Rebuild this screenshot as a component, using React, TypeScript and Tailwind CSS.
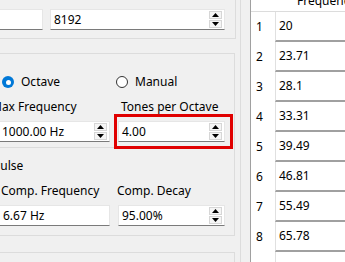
import React from "react";

const FONT = { fontFamily: '"Noto Sans", "Liberation Sans", sans-serif' };

function Arrows() {
  return (
    <div className="flex flex-col gap-[1px] w-[13px] mr-[2px]">
      <div className="h-[8px] bg-[#f5f5f5] border border-[#d6d6d6] flex items-center justify-center">
        <svg width="7" height="4" viewBox="0 0 7 4">
          <path d="M0 4 L3.5 0 L7 4 Z" fill="#000" />
        </svg>
      </div>
      <div className="h-[8px] bg-[#f5f5f5] border border-[#d6d6d6] flex items-center justify-center">
        <svg width="7" height="4" viewBox="0 0 7 4">
          <path d="M0 0 L3.5 4 L7 0 Z" fill="#000" />
        </svg>
      </div>
    </div>
  );
}

function SpinBox({
  value,
  width,
  arrows = true,
  className = "",
}: {
  value: string;
  width: string;
  arrows?: boolean;
  className?: string;
}) {
  return (
    <div
      className={`h-[21px] bg-white border border-[#e6e6e6] border-b-[#7a7a7a] flex items-center ${width} ${className}`}
    >
      <span className="flex-1 pl-[3px] text-[12px] leading-none text-black">{value}</span>
      {arrows && <Arrows />}
    </div>
  );
}

function Radio({ checked, label }: { checked: boolean; label: string }) {
  return (
    <div className="flex items-center gap-[7px]">
      {checked ? (
        <div className="w-[12px] h-[12px] rounded-full bg-[#0078d7] flex items-center justify-center">
          <div className="w-[5px] h-[5px] rounded-full bg-white" />
        </div>
      ) : (
        <div className="w-[12px] h-[12px] rounded-full border border-[#333] bg-white" />
      )}
      <span className="text-[12px] leading-none">{label}</span>
    </div>
  );
}

const ROWS = ["20", "23.71", "28.1", "33.31", "39.49", "46.81", "55.49", "65.78", ""];

export default function App() {
  return (
    <div
      className="w-[345px] h-[262px] overflow-hidden bg-[#f0f0f0] flex text-black"
      style={FONT}
    >
      {/* settings column */}
      <div className="w-[241px] h-full border-r border-[#dcdcdc] flex flex-col shrink-0">
        <div className="w-[236px] h-[39px] shrink-0 border-r border-b border-[#dcdcdc] flex gap-[7px] pt-[9px]">
          <SpinBox value="" width="w-[43px]" arrows={false} className="border-l-0" />
          <SpinBox value="8192" width="w-[175px]" />
        </div>

        <div className="mt-[14px] w-[235px] h-[183px] shrink-0 border-t border-r border-b border-[#dcdcdc] flex flex-col">
          <div className="mt-[22px] h-[12px] flex items-center">
            <div className="ml-[2px] w-[114px]">
              <Radio checked label="Octave" />
            </div>
            <Radio checked={false} label="Manual" />
          </div>

          <div className="mt-[11px] h-[16px] flex items-center text-[12px] whitespace-nowrap">
            <span className="-ml-[9px] w-[130px]">Max Frequency</span>
            <span>Tones per Octave</span>
          </div>

          <div className="mt-[6px] flex">
            <SpinBox value="1000.00 Hz" width="w-[111px]" className="border-l-0 -ml-[1px]" />
            <div className="relative ml-[8px]">
              <SpinBox value="4.00" width="w-[107px]" />
              <div className="absolute -left-[4px] -top-[7px] w-[119px] h-[35px] border-[3px] border-[#e00000]" />
            </div>
          </div>

          <div className="mt-[5px] w-[231px] border-t border-[#dcdcdc]" />

          <div className="mt-[10px] h-[16px] flex items-center text-[12px]">
            <span className="-ml-[7px]">Pulse</span>
          </div>

          <div className="mt-[9px] h-[16px] flex items-center text-[12px] whitespace-nowrap">
            <span className="ml-[1px] w-[116px]">Comp. Frequency</span>
            <span>Comp. Decay</span>
          </div>

          <div className="mt-[6px] flex gap-[8px]">
            <SpinBox value="6.67 Hz" width="w-[110px]" arrows={false} className="border-l-0" />
            <SpinBox value="95.00%" width="w-[107px]" />
          </div>
        </div>

        <div className="mt-[16px] w-[235px] flex-1 border-t border-r border-[#dcdcdc]" />
      </div>

      {/* table */}
      <div className="ml-[9px] flex-1 h-full border-l border-[#a0a0a0] bg-white flex text-[12px] overflow-hidden">
        <div className="flex-1 flex flex-col">
          <div className="h-[12px] shrink-0 border-b border-[#dcdcdc] flex overflow-hidden">
            <div className="w-[24px] shrink-0" />
            <div className="flex-1 pl-[22px] overflow-hidden">
              <div className="-mt-[7px] leading-[16px] whitespace-nowrap">Frequency</div>
            </div>
          </div>
          {ROWS.map((v, i) => (
            <div key={i} className="h-[30px] flex shrink-0">
              <div className="w-[24px] shrink-0 flex items-center pl-[5px]">{v ? i + 1 : ""}</div>
              <div className="flex-1 border-l border-[#e0e0e0] border-b-[2px] border-b-[#a0a0a0] flex items-center pl-[3px]">
                {v}
              </div>
            </div>
          ))}
        </div>
        <div className="w-[3px] shrink-0 border-l border-[#a0a0a0] bg-[#f0f0f0]" />
      </div>
    </div>
  );
}
